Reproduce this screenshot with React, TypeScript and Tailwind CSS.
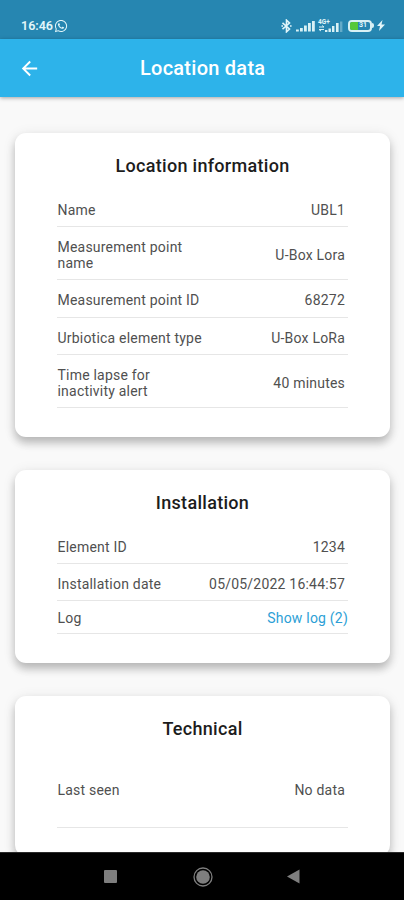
import { ReactNode } from "react";
import { FaWhatsapp } from "react-icons/fa";
import { MdArrowBack } from "react-icons/md";

interface RowProps {
  label: string;
  value: string;
  size?: "short" | "normal" | "double" | "tall";
  link?: boolean;
}

interface CardProps {
  title: string;
  children: ReactNode;
}

const rowSizes = {
  short: "h-[33px] pt-[2px]",
  normal: "h-[37.3px] pt-1",
  double: "h-[53.5px] pt-1",
  tall: "h-[75px]",
};

const Row = ({ label, value, size = "normal", link = false }: RowProps) => (
  <div
    className={`${rowSizes[size]} flex items-center justify-between border-b border-[#e6e6e6] text-[14px] leading-4 tracking-[0.21px] text-[#505050]`}
  >
    <span className="w-[150px] shrink-0 pl-[0.5px]">{label}</span>
    {link ? (
      <button type="button" className="text-[#2d9fd6]">
        {value}
      </button>
    ) : (
      <span className="whitespace-nowrap pr-[3px]">{value}</span>
    )}
  </div>
);

const Card = ({ title, children }: CardProps) => (
  <section className="rounded-[11px] bg-white px-[42px] pb-[28.5px] shadow-[0_6px_9px_rgba(0,0,0,0.22),0_2px_14px_rgba(0,0,0,0.09)]">
    <h2 className="h-[56.5px] pt-5 text-center text-[18px] font-medium leading-[26px] tracking-[0.3px] text-[#1c1c1c]">
      {title}
    </h2>
    {children}
  </section>
);

const Bluetooth = () => (
  <svg
    width="11"
    height="14"
    viewBox="0 0 11 14"
    fill="none"
    stroke="currentColor"
    strokeWidth="1.6"
  >
    <path d="M1.5 3.8 8.5 10 5.5 12.8V1.2L8.5 4 1.5 10.2" />
    <path d="M.4 7h1.6M9 7h1.600" />
  </svg>
);

const Signal = () => (
  <svg width="19" height="12" viewBox="0 0 19 12" fill="#d9f1f5">
    <rect x="0" y="9.5" width="2.8" height="2" />
    <rect x="4" y="8" width="2.8" height="3.5" />
    <rect x="8" y="5.5" width="2.8" height="6" />
    <rect x="12" y="3" width="2.8" height="8.5" />
    <rect x="16" y="1" width="2.8" height="10.5" />
  </svg>
);

const MobileSignal = () => (
  <div className="relative h-[14px] w-[25px]">
    <span className="absolute left-0 top-0 text-[6.5px] font-bold leading-[6px]">
      4G+
    </span>
    <svg
      className="absolute inset-0"
      width="25"
      height="14"
      viewBox="0 0 25 14"
      fill="#d9f1f5"
    >
      <path d="M1 8h5L4 6.5M6 10.5H1l2 1.5" stroke="#d9f1f5" fill="none" />
      <rect x="7" y="11" width="2.4" height="2" />
      <rect x="10.5" y="9.5" width="2.4" height="3.5" />
      <rect x="14" y="7" width="2.4" height="6" />
      <rect x="18" y="4" width="2.6" height="9" />
      <rect x="22" y="2.5" width="2.4" height="10.5" opacity=".35" />
    </svg>
  </div>
);

const Battery = () => (
  <div className="flex items-center">
    <div className="flex h-[12px] w-[24px] items-center rounded-[4px] border-2 border-[#d9f1f5]">
      <div className="h-2 w-[8px] shrink-0 rounded-l-[2px] bg-[#55c83a]" />
      <span className="pl-px text-[7px] font-bold leading-[7px]">31</span>
    </div>
    <div className="h-[5px] w-[2px] rounded-r bg-[#d9f1f5]" />
  </div>
);

const StatusBar = () => (
  <div className="flex h-[38.5px] shrink-0 items-end justify-between bg-[#2686b1] pb-[6px] pl-[21px] pr-[19px] text-[#e2f6fa]">
    <div className="flex items-center gap-px">
      <span className="text-[12.5px] font-semibold leading-[14px]">16:46</span>
      <FaWhatsapp size={14} />
    </div>
    <div className="flex items-center">
      <div className="mr-[4px]">
        <Bluetooth />
      </div>
      <Signal />
      <div className="ml-[3px] mr-[5px]">
        <MobileSignal />
      </div>
      <Battery />
      <svg className="ml-[3px]" width="8" height="11" viewBox="0 0 8 11">
        <path d="M5.5 0 0 6h3l-1 5 6-6.5H4.5z" fill="currentColor" />
      </svg>
    </div>
  </div>
);

const NavigationBar = () => (
  <nav className="flex h-12 shrink-0 items-center border-t border-[#2a2a2a] bg-black pl-[104px]">
    <div className="size-[13px] rounded-[1px] bg-[#7e7e7e]" />
    <svg className="ml-[76px]" width="20" height="20" viewBox="0 0 20 20">
      <circle cx="10" cy="10" r="9" fill="none" stroke="#7e7e7e" strokeWidth="1.3" />
      <circle cx="10" cy="10" r="6.8" fill="#7e7e7e" />
    </svg>
    <svg className="ml-[74px]" width="13" height="15" viewBox="0 0 13 15">
      <path d="M12.5.5v14L0 7.5z" fill="#7e7e7e" />
    </svg>
  </nav>
);

export default function App() {
  return (
    <div className="flex h-[900px] w-[404px] flex-col overflow-hidden bg-[#f9f9f9] font-['Roboto',sans-serif]">
      <StatusBar />
      <header className="z-10 flex h-[58.5px] shrink-0 items-center bg-[#2db3ea] pl-[18px] pt-px text-white shadow-[0_1px_4px_rgba(0,0,0,0.35)]">
        <button type="button" aria-label="Back">
          <MdArrowBack size={23} />
        </button>
        <h1 className="ml-[99px] text-[20px] font-medium tracking-[0.25px]">
          Location data
        </h1>
      </header>
      <main className="flex min-h-0 flex-1 flex-col gap-[33.5px] overflow-hidden pl-[15px] pt-[36px] pr-[14px] *:shrink-0">
        <Card title="Location information">
          <Row label="Name" value="UBL1" />
          <Row label="Measurement point name" value="U-Box Lora" size="double" />
          <Row label="Measurement point ID" value="68272" />
          <Row label="Urbiotica element type" value="U-Box LoRa" />
          <Row
            label="Time lapse for inactivity alert"
            value="40 minutes"
            size="double"
          />
        </Card>
        <Card title="Installation">
          <Row label="Element ID" value="1234" />
          <Row label="Installation date" value="05/05/2022 16:44:57" />
          <Row label="Log" value="Show log (2)" size="short" link />
        </Card>
        <Card title="Technical">
          <Row label="Last seen" value="No data" size="tall" />
        </Card>
      </main>
      <NavigationBar />
    </div>
  );
}
